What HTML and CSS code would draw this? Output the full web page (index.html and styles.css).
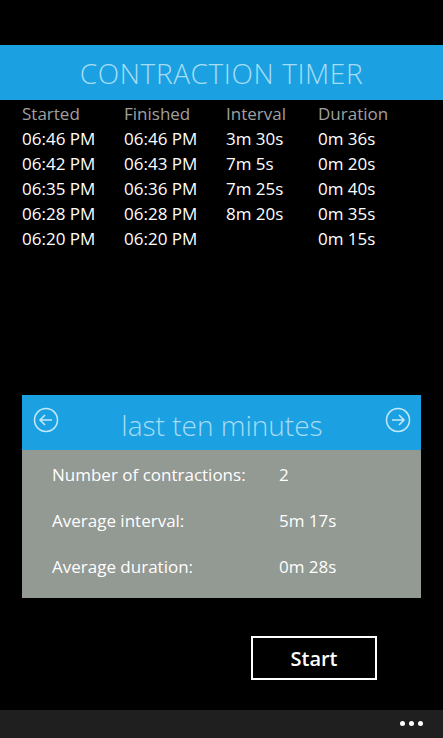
FILE: index.html
```html
<!DOCTYPE html>
<html lang="en">
<head>
    <link rel="stylesheet" href="styles.css">
    <meta charset="UTF-8">
    <title>Contraction Timer</title>
</head>
<body>
    <div class="screen">
        <header class="title-bar">
            <h1>CONTRACTION TIMER</h1>
        </header>

        <table class="history">
            <thead>
                <tr>
                    <th>Started</th>
                    <th>Finished</th>
                    <th>Interval</th>
                    <th>Duration</th>
                </tr>
            </thead>
            <tbody>
                <tr><td>06:46 PM</td><td>06:46 PM</td><td>3m 30s</td><td>0m 36s</td></tr>
                <tr><td>06:42 PM</td><td>06:43 PM</td><td>7m 5s</td><td>0m 20s</td></tr>
                <tr><td>06:35 PM</td><td>06:36 PM</td><td>7m 25s</td><td>0m 40s</td></tr>
                <tr><td>06:28 PM</td><td>06:28 PM</td><td>8m 20s</td><td>0m 35s</td></tr>
                <tr><td>06:20 PM</td><td>06:20 PM</td><td></td><td>0m 15s</td></tr>
            </tbody>
        </table>

        <section class="summary">
            <div class="summary-head">
                <svg class="nav-icon" width="26" height="26" viewBox="0 0 26 26">
                    <circle cx="13" cy="13" r="11.5" />
                    <path d="M19 13H7M12 8l-5 5 5 5" />
                </svg>
                <h2>last ten minutes</h2>
                <svg class="nav-icon" width="26" height="26" viewBox="0 0 26 26">
                    <circle cx="13" cy="13" r="11.5" />
                    <path d="M7 13h12M14 8l5 5-5 5" />
                </svg>
            </div>
            <div class="summary-body">
                <div class="stat"><span class="stat-label">Number of contractions:</span><span>2</span></div>
                <div class="stat"><span class="stat-label">Average interval:</span><span>5m 17s</span></div>
                <div class="stat"><span class="stat-label">Average duration:</span><span>0m 28s</span></div>
            </div>
        </section>

        <div class="actions">
            <button class="start-button">Start</button>
        </div>
    </div>

    <footer class="app-bar">
        <span class="dot"></span><span class="dot"></span><span class="dot"></span>
    </footer>
</body>
</html>
```

FILE: styles.css
```css
body {
    margin: 0;
    padding: 0;
    background-color: #000000;
    color: #ffffff;
    font-family: "Open Sans", "Noto Sans", sans-serif;
    width: 443px;
    height: 738px;
    overflow: hidden;
    display: flex;
    flex-direction: column;
}

.screen {
    flex: 1;
    padding-top: 45px;
}

.title-bar {
    background-color: #1ba1e2;
    height: 55px;
    display: flex;
    align-items: center;
    justify-content: center;
}

h1 {
    margin: 0;
    font-weight: 300;
    font-size: 28px;
    color: #a6dcf4;
    letter-spacing: 0.6px;
}

.history {
    margin: 1px 0 0 22px;
    border-collapse: collapse;
    font-size: 17px;
}

.history th,
.history td {
    padding: 0;
    height: 25px;
    text-align: left;
    white-space: nowrap;
}

.history th {
    font-weight: 400;
    color: #a0a0a0;
}

.history th:nth-child(1), .history td:nth-child(1) { width: 102px; }
.history th:nth-child(2), .history td:nth-child(2) { width: 102px; }
.history th:nth-child(3), .history td:nth-child(3) { width: 92px; }

.summary {
    margin: 144px 22px 0 22px;
}

.summary-head {
    background-color: #1ba1e2;
    height: 55px;
    display: flex;
    align-items: center;
    justify-content: space-between;
    padding: 0 10px 0 11px;
}

.nav-icon {
    fill: none;
    stroke: #c5e9f8;
    stroke-width: 1.5;
    margin-top: -5px;
}

h2 {
    margin: 0;
    padding-top: 5px;
    font-weight: 300;
    font-size: 28px;
    color: #a6dcf4;
}

.summary-body {
    background-color: #939993;
    padding: 1px 0 0 30px;
    height: 148px;
    box-sizing: border-box;
}

.stat {
    display: flex;
    height: 46px;
    align-items: center;
    font-size: 17px;
}

.stat-label {
    width: 227px;
}

.actions {
    display: flex;
    justify-content: flex-end;
    padding: 38px 66px 0 0;
}

.start-button {
    background-color: #000000;
    color: #ffffff;
    border: 2px solid #ffffff;
    width: 126px;
    height: 44px;
    font-family: inherit;
    font-size: 20px;
    font-weight: 600;
    cursor: pointer;
}

.app-bar {
    height: 28px;
    box-sizing: border-box;
    background-color: #1f1f1f;
    display: flex;
    justify-content: flex-end;
    align-items: center;
    gap: 4px;
    padding: 0 20px 2px 0;
}

.dot {
    width: 5px;
    height: 5px;
    border-radius: 50%;
    background-color: #ffffff;
}
```
